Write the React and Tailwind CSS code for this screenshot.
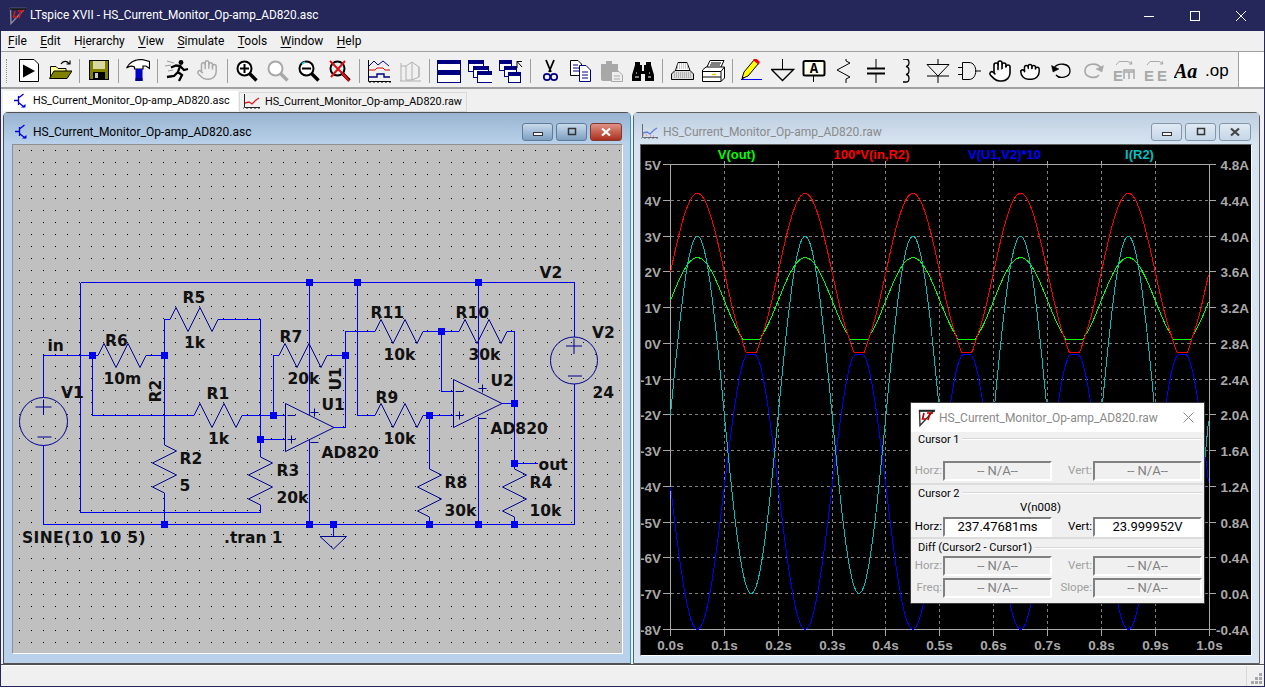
import React from 'react';
import { Hand, Grab } from 'lucide-react';

const UI = { fontFamily: 'Roboto, "Noto Sans", sans-serif' };
const ARIAL = '"Liberation Sans", Arial, sans-serif';
const SCH = '"DejaVu Sans", Verdana, sans-serif';
const TITLE = 'HS_Current_Monitor_Op-amp_AD820';

// ---- small pieces ----

const Logo = ({ dark }) => (
  <svg width="18" height="18" viewBox="0 0 18 18" className="shrink-0">
    <path d="M1.5 1.5H16L2 16.5Z" fill={dark ? 'none' : '#fff'} stroke={dark ? '#8c8c9c' : '#333'} strokeWidth="1.4" />
    <path d="M1 2H17" stroke={dark ? '#111' : '#222'} strokeWidth="1.6" />
    <path d="M6 4L4.5 10H8M9 4H15M12 4L10 11" fill="none" stroke={dark ? '#d01818' : '#c00000'} strokeWidth="1.7" />
  </svg>
);

const Transistor = () => (
  <svg width="14" height="16" viewBox="0 0 14 16" className="shrink-0" stroke="#0000e0" fill="none" strokeWidth="1.3">
    <path d="M5.5 3V12M1 7.5H5.5M5.5 5L10.5 1M5.5 9.5L11 14" />
    <path d="M8 14.5H12.5V11Z" fill="#0000e0" stroke="none" />
  </svg>
);

const MiniPlot = ({ faint }) => (
  <svg width="17" height="16" viewBox="0 0 17 16" className="shrink-0" fill="none" opacity={faint ? 0.6 : 1}>
    <path d="M1.5 0V13.5H17M0 13.5V15M4 13.5V15M8 13.5V15M12 13.5V15M16 13.5V15" stroke="#222" />
    <path d="M2 9L6 8L9 10L13 6L16 4" stroke={faint ? '#2040d0' : '#e02020'} strokeWidth="1.3" />
    {faint && <path d="M2 11L6 11M9 12L14 12" stroke="#e02020" strokeDasharray="1 2" />}
  </svg>
);

const Lens = ({ mark, gray }) => {
  const c = gray ? '#a8a8a8' : '#000';
  return (
    <svg width="24" height="24" viewBox="0 0 24 24" fill="none">
      <path d="M14 14L21.5 21.5" stroke={c} strokeWidth="3.4" />
      <circle cx="9.5" cy="9.5" r="7" fill={mark === 'x' ? '#d8f6f6' : '#fff'} stroke={c} strokeWidth="2" />
      {mark === 'plus' && <path d="M5 9.5H14M9.5 5V14" stroke="#000" strokeWidth="2" />}
      {mark === 'minus' && <path d="M5 9.5H14" stroke="#000" strokeWidth="2" />}
      {mark === 'minus' && <path d="M5 5L8 3" stroke="#30d0e0" strokeWidth="2" />}
      {mark === 'x' && <path d="M2 2L19 19M17 2L3 18M14 14L21 22" stroke="#e01010" strokeWidth="2" />}
    </svg>
  );
};

const Svg = ({ children, ...rest }) => (
  <svg width="24" height="24" viewBox="0 0 24 24" fill="none" {...rest}>{children}</svg>
);

const MiniWin = ({ x, y, w = 15, h = 11 }) => (
  <g>
    <rect x={x + 0.5} y={y + 0.5} width={w} height={h} fill="#fff" stroke="#000080" />
    <rect x={x + 1} y={y + 1} width={w} height={3} fill="#000080" />
  </g>
);

const EGlyph = ({ tail }) => (
  <Svg>
    <path d="M4 6L7 2.5H16L20 5M20 5L17 5M20 5L19 2" stroke="#aaa" />
    <text x="1" y="22" fontFamily={ARIAL} fontWeight="700" fontSize="15" fill="#a8a8a8">E</text>
    {tail}
  </Svg>
);

const TOOLBAR = [
  <Svg>
    <path d="M2.5 .5H17L21.5 5V22.5H2.5Z" fill="#fff" stroke="#000" />
    <path d="M6 5.5V18.5L18 12Z" fill="#000" />
  </Svg>,
  <Svg>
    <path d="M2.5 19V7.5H8L10 9.5H18V12" fill="#ffff90" stroke="#000" />
    <path d="M1.5 19.5L6 12H24L19 19.5Z" fill="#808000" stroke="#000" />
    <path d="M13 5C15 1.500 19 1.500 21 4.500M18.500 5H22V1.500" stroke="#000" strokeWidth="1.2" />
  </Svg>,
  null,
  <Svg>
    <rect x="2.500" y="1.500" width="19" height="19" fill="#808000" stroke="#000" />
    <rect x="6" y="2" width="12" height="8" fill="#d8d8a0" />
    <rect x="6" y="13" width="12" height="7" fill="#000" />
    <rect x="8" y="14" width="3" height="5" fill="#c8c8c8" />
  </Svg>,
  null,
  <Svg>
    <path d="M.5 9C4 2.500 10 .5 16 .5L23.500 2.500V9.500L20 7H17V10H8.500V8C6 6.500 3 7 .5 9Z" fill="#fff" stroke="#000" strokeWidth="1.2" />
    <rect x="9.500" y="10" width="7" height="12" fill="#0000c8" />
    <rect x="9.500" y="19" width="7" height="3" fill="#000080" />
  </Svg>,
  null,
  <Svg>
    <circle cx="16" cy="3.500" r="2.400" fill="#000" />
    <path d="M6 8.500L11 6.500L15 7L13 13L17 16L14 22M13 13L9 17L2 18M15 7L19 11L23 10" stroke="#000" strokeWidth="2.300" />
    <path d="M2 2L9 4M0 7L6 6M3 12L8 11" stroke="#999" strokeWidth="1" />
  </Svg>,
  <Hand size={22} strokeWidth={1.6} color="#a8a8a8" />,
  null,
  <Lens mark="plus" />,
  <Lens gray />,
  <Lens mark="minus" />,
  <Lens mark="x" />,
  null,
  <Svg>
    <path d="M1.500 1V22.500H24" stroke="#000" />
    <path d="M2 7L7 2L11 6L16 2L22 7" stroke="#0000c0" />
    <path d="M2 11H8L10 9H16L18 11H23" stroke="#e00000" />
    <path d="M2 18H10V15H17V18H23" stroke="#000080" strokeWidth="1.4" />
    <path d="M3 22V24M7 22V24M11 22V24M15 22V24M19 22V24M23 22V24" stroke="#000" />
  </Svg>,
  <Svg stroke="#b0b0b0">
    <path d="M2 22H23M3 4V22M3 7H8L14 3L21 8V18L14 21H8V7" />
    <path d="M14 3V21M21 8V18" />
  </Svg>,
  null,
  <Svg>
    <MiniWin x={0} y={1} w={23} h={10} />
    <MiniWin x={0} y={12} w={23} h={11} />
  </Svg>,
  <Svg>
    <MiniWin x={0} y={1} />
    <MiniWin x={5} y={7} />
    <MiniWin x={9} y={12} />
  </Svg>,
  <Svg>
    <MiniWin x={0} y={1} w={12} h={10} />
    <MiniWin x={5} y={7} w={12} h={10} />
    <MiniWin x={9} y={13} w={12} h={10} />
    <path d="M18 9V2.500H23M18 2.500L23 8" stroke="#000" strokeWidth="1" />
  </Svg>,
  null,
  <Svg>
    <path d="M8 1L13 13M16 1L11 13" stroke="#000" strokeWidth="1.800" />
    <circle cx="9" cy="18" r="3.200" stroke="#000080" strokeWidth="1.700" />
    <circle cx="16" cy="18" r="3.200" stroke="#000080" strokeWidth="1.700" />
  </Svg>,
  <Svg>
    <path d="M1.500 1.500H9L12.500 5V16.500H1.500Z" fill="#fff" stroke="#000" />
    <path d="M10.500 6.500H17L21.500 11V22.500H10.500Z" fill="#fff" stroke="#000080" />
    <path d="M4 6H9M4 9H10M4 12H10M13 13H19M13 16H19M13 19H19" stroke="#000080" />
  </Svg>,
  <Svg>
    <path d="M1 5H6V2H12V5H18V13H14V22H3Q1 22 1 20Z" fill="#a8a8a8" />
    <path d="M11.500 12.500H19L22.500 16V22.500H11.500Z" fill="#eee" stroke="#a8a8a8" />
    <path d="M14 17H20M14 20H20" stroke="#a8a8a8" />
  </Svg>,
  <Svg>
    <path d="M4 3H9V6H11V12H13V6H15V3H20V6L23 16V22H14V15H10V22H1V16L4 6Z" fill="#000" />
    <path d="M5 14H6M18 14H19M4 18H8M17 18H20" stroke="#fff" />
  </Svg>,
  null,
  <Svg>
    <path d="M5.500 11.500L8 3.500H17L20 11.500" fill="#fff" stroke="#000" />
    <path d="M7 5H18M7 7H18M7 9H19" stroke="#999" strokeDasharray="1 1" />
    <path d="M1.500 20.500V15L5 11.500H20L23.500 15V20.500Z" fill="#ddd" stroke="#000" />
    <path d="M4 14H21M4 16H21M4 18H21" stroke="#888" strokeDasharray="1 1" />
  </Svg>,
  <Svg>
    <path d="M6 8L9 1.500H23L20 8" fill="#fff" stroke="#000" />
    <path d="M10 4H20M9 6H19" stroke="#000" />
    <path d="M1.500 22.500V11L5 8H23.500V19L20 22.500Z" fill="#fff" stroke="#000" />
    <path d="M1.500 12.500H20V22.500M20 12.500L23.500 8M2 18H20" stroke="#000" />
    <path d="M11 15.500H15" stroke="#e8c800" strokeWidth="1.500" />
  </Svg>,
  null,
  <Svg>
    <path d="M2 19.500L4 13L14 1L18.500 4.500L8 17Z" fill="#ffff00" stroke="#000" />
    <path d="M14 1L15.500 0L19 3L18.500 4.500Z" fill="#f00000" stroke="#f00000" strokeWidth="1.500" />
    <path d="M2 17.500V20L4.500 19Z" fill="#000" />
    <path d="M1 20.500H22" stroke="#0000ff" />
  </Svg>,
  <Svg stroke="#000">
    <path d="M11.500 0V10.500" />
    <path d="M.5 10.500H22.500L11.500 21.500Z" strokeWidth="1.300" />
  </Svg>,
  <Svg>
    <rect x="1.500" y="2" width="21" height="14.500" rx="1.500" fill="#fffff0" stroke="#000" strokeWidth="2" />
    <path d="M11.500 16.500V23" stroke="#000" />
    <text x="12" y="14" textAnchor="middle" fontFamily='"Liberation Mono", monospace' fontWeight="700" fontSize="14" fill="#000">A</text>
  </Svg>,
  <Svg stroke="#000">
    <path d="M13 0V2L17 4L4 11L17 18L13 20V24" />
  </Svg>,
  <Svg stroke="#000">
    <path d="M12 0V9M12 15V24" />
    <path d="M3 9.500H21M3 14.500H21" strokeWidth="1.800" />
  </Svg>,
  <Svg stroke="#000" strokeWidth="1.300">
    <path d="M8 0H11C15 0 15 7 11 7.500C15 8 15 15 11 15.500C15 16 15 23 11 23H8" />
  </Svg>,
  <Svg stroke="#000">
    <path d="M12 0V5M12 17V24M1 5.500H23L12 17ZM1 17H23" />
  </Svg>,
  <Svg stroke="#000">
    <path d="M5.500 3.500H12C21 3.500 21 20.500 12 20.500H5.500ZM1 8.500H5.500M1 15.500H5.500M18 12H24" />
  </Svg>,
  <Hand size={24} strokeWidth={1.6} color="#000" fill="#fff" />,
  <Grab size={22} strokeWidth={1.6} color="#000" fill="#fff" />,
  <Svg stroke="#000">
    <path d="M4 9C8 3 20 4 20 12C20 19 9 20 6 16" strokeWidth="1.300" />
    <path d="M1.500 6.500L3 13L9 10Z" fill="#000" strokeWidth=".5" />
  </Svg>,
  <Svg stroke="#a8a8a8">
    <path d="M20 9C16 3 4 4 4 12C4 19 15 20 18 16" strokeWidth="1.600" />
    <path d="M22.500 6.500L21 13L15 10Z" fill="#a8a8a8" strokeWidth=".5" />
  </Svg>,
  <EGlyph tail={<path d="M12 11H22V13H12ZM12 13V20M17 13V20M22 13V20" stroke="#a8a8a8" strokeWidth="1.500" />} />,
  <EGlyph tail={<text x="14" y="22" fontFamily={ARIAL} fontWeight="700" fontSize="15" fill="#a8a8a8">E</text>} />,
  <Svg>
    <text x="0" y="19" fontFamily='"Liberation Serif", serif' fontWeight="700" fontStyle="italic" fontSize="20" fill="#000">Aa</text>
  </Svg>,
  <Svg>
    <text x="0" y="17" fontFamily={ARIAL} fontSize="17" fill="#000">.op</text>
  </Svg>,
];

const CapButton = ({ kind, active }) => {
  const bg = kind === 'close' && active
    ? 'bg-gradient-to-b from-[#dc9386] via-[#c8604e] to-[#a83020] border-[#7d3a30]'
    : active
      ? 'bg-gradient-to-b from-[#c9d9ea] via-[#a3bdd8] to-[#7f9fc0] border-[#5d7c9c]'
      : 'bg-gradient-to-b from-[#e0eaf4] to-[#c5d6e7] border-[#8397ab]';
  const ink = kind === 'close' ? (active ? '#fff' : '#444') : '#333';
  return (
    <div className={`h-[18px] rounded-[3px] border flex items-center justify-center ${kind === 'close' ? 'w-[32px]' : 'w-[31px]'} ${bg}`}>
      <svg width="14" height="10" viewBox="0 0 14 10" fill="none">
        {kind === 'min' && <rect x="2.500" y="5.500" width="9" height="3" fill="#f4f4f4" stroke={ink} />}
        {kind === 'max' && <rect x="3.500" y="1.500" width="7" height="6" stroke={ink} strokeWidth="1.500" />}
        {kind === 'close' && <path d="M3 1.500L11 8.500M11 1.500L3 8.500" stroke={ink} strokeWidth="2.200" />}
      </svg>
    </div>
  );
};

const ChildTitle = ({ active, icon, children }) => (
  <div className={`h-[31px] pt-[7px] flex items-center bg-gradient-to-b ${active ? 'from-[#99b4d1] to-[#b9d1ea]' : 'from-[#bfcfe0] to-[#d7e4f2]'}`}>
    <div className="w-[29px] flex justify-end pr-[5px]">{icon}</div>
    <div className={`flex-1 text-[12px] leading-none ${active ? 'text-[#000]' : 'text-[#8a8a8a]'}`} style={UI}>{children}</div>
    <div className="flex gap-[3px] pr-[8px]">
      <CapButton kind="min" active={active} />
      <CapButton kind="max" active={active} />
      <CapButton kind="close" active={active} />
    </div>
  </div>
);

// ---- schematic ----

const wires = [
  'M80.5 282.5H574.5V337M574.5 384V524.5H43.5V445M43.5 397V355.5H98',
  'M80.5 282.5V512.5H260.500V505',
  'M146 355.5H164.500M164.500 445V319.500H170M218 319.500H260.500V457',
  'M92.500 355.500V415.500H194M242 415.500H285M260.500 439.500H285',
  'M273.500 415.500V355.500H279M327 355.500H345.500M333.500 427.500H345.500V331.500H375M423 331.500H459M507 331.500H514.500V469',
  'M309.500 282.500V415M309.500 439V524.500M478.500 282.500V383M478.500 417V524.500',
  'M357.500 282.500V415.500H375M423 415.500H453M441.500 331.500V391.500H453M429.500 415.500V469M429.500 517V524.500',
  'M502 403.500H514.500M514.500 517V524.500M514.500 463.500H538M164.500 493V524.500M333.500 524.500V536',
];

const zigH = (x, y) => `M${x} ${y}l6 -12l12 24l12 -24l12 24l6 -12`;
const zigV = (x, y) => `M${x} ${y}l12 6l-24 12l24 12l-24 12l12 6`;

const resistors = [
  zigH(98, 355.5), zigH(170, 319.5), zigH(194, 415.5), zigH(279, 355.5),
  zigH(375, 331.5), zigH(459, 331.5), zigH(375, 415.5),
  zigV(164.5, 445), zigV(260.5, 457), zigV(429.5, 469), zigV(514.5, 469),
];

const junctions = [
  [309, 282], [357, 282], [478, 282], [92, 355], [164, 355], [273, 415], [260, 439],
  [164, 524], [309, 524], [333, 524], [429, 524], [478, 524], [514, 524], [345, 355],
  [441, 331], [429, 415], [514, 403], [514, 463],
];

const labels = [
  ['in', 47.5, 351], ['V1', 61, 398], ['R6', 105, 346], ['10m', 103.5, 384], ['R5', 182.5, 302.5],
  ['1k', 184, 347.5], ['R1', 206.5, 398.5], ['1k', 208, 444], ['R7', 279.5, 342], ['20k', 287.5, 384],
  ['R2', 179.5, 464], ['5', 179.5, 490.5], ['R3', 276.5, 476], ['20k', 276.5, 502.5],
  ['SINE(10 10 5)', 22, 542.5, 0.35], ['.tran 1', 224, 542.5], ['V2', 539.5, 277.5], ['R11', 370.5, 318],
  ['10k', 383.5, 360], ['R10', 455.5, 318], ['30k', 468.5, 360], ['U1', 321.5, 409.5], ['AD820', 321.5, 458],
  ['R9', 375.5, 402.5], ['10k', 383.5, 444], ['U2', 490.5, 385.5], ['AD820', 490.5, 434], ['out', 538.5, 469.5],
  ['R8', 444.5, 488], ['30k', 444.5, 516], ['R4', 529.5, 488], ['10k', 529.5, 516], ['V2', 592, 337.5], ['24', 592.5, 398],
];

const dots = [];
for (let x = 19; x < 622; x += 12) for (let y = 150; y < 653; y += 12) dots.push(`M${x} ${y}h1v1h-1z`);

const Source = ({ cx, cy, r }) => (
  <g fill="none" stroke="#000090">
    <circle cx={cx} cy={cy} r={r} />
    <path d={`M${cx - 8} ${cy - 14.5}H${cx + 8}M${cx} ${cy - 22}V${cy - 6.5}M${cx - 6} ${cy + 15.5}H${cx + 8}`} />
  </g>
);

const OpAmp = ({ x, y }) => (
  <g fill="none" stroke="#000090">
    <path d={`M${x} ${y}V${y + 48}L${x + 48.5} ${y + 24}Z`} />
    <path d={`M${x + 2} ${y + 12}h8M${x + 2} ${y + 36}h8M${x + 6} ${y + 32}v8`} />
    <path d={`M${x + 25} ${y + 9}h8M${x + 29} ${y + 5}v8M${x + 25} ${y + 39}h8`} />
  </g>
);

const Schematic = () => (
  <svg width="609" height="508" viewBox="13 145 609 508" className="block bg-[#c0c0c0]">
    <path d={dots.join('')} fill="#000" />
    <Source cx={43.5} cy={421.5} r={24} />
    <Source cx={574} cy={360.5} r={23.5} />
    <OpAmp x={285.5} y={403.5} />
    <OpAmp x={453.5} y={379.5} />
    <g fill="none" stroke="#0000f0" shapeRendering="crispEdges">
      {wires.map((d, i) => <path key={i} d={d} />)}
    </g>
    <g fill="none" stroke="#000090">
      {resistors.map((d, i) => <path key={i} d={d} />)}
      <path d="M320 536.500H346.500L333.500 549Z" />
    </g>
    <g fill="#0000f0">
      {junctions.map(([x, y], i) => <rect key={i} x={x - 3} y={y - 3} width="7" height="7" />)}
    </g>
    <g fontFamily={SCH} fontWeight="700" fontSize="15.5" fill="#111">
      {labels.map(([t, x, y, sp], i) => <text key={i} x={x} y={y} letterSpacing={sp}>{t}</text>)}
      <text transform="translate(160.500 402.500) rotate(-90)">R2</text>
      <text transform="translate(340.500 390.500) rotate(-90)">U1</text>
    </g>
  </svg>
);

// ---- waveform plot ----

const X0 = 670.5;
const XS = 538.6;
const Y0 = 343.4;
const YS = 35.72;
const sy = (v) => Y0 - v * YS;
const gridY = (v) => Math.floor(sy(v)) + 0.5;
const gridX = (k) => Math.floor(X0 + (k / 10) * XS) + 0.5;
const sinT = (t) => Math.sin(2 * Math.PI * 5 * t);
const dist = (t) => Math.abs(((t % 0.2) + 0.2) % 0.2 - 0.15);

const vRed = (t) => {
  const d = dist(t);
  if (d < 0.01) return -0.25;
  if (d < 0.02) return -0.25 + ((d - 0.01) / 0.01) * 0.47;
  return 2 + 2.2 * sinT(t);
};
const vGreen = (t) => (dist(t) < 0.018 ? 0.1 : 1.2 + 1.2 * sinT(t));
const vBlue = (t) => {
  const u = 4 * (1 + sinT(t));
  return -Math.sqrt(0.09 + u * u);
};
const vTeal = (t) => -2 + 5 * sinT(t);

const trace = (fn) => {
  let d = '';
  for (let x = 0; x <= XS; x += 1) {
    const t = x / XS;
    d += `${x === 0 ? 'M' : 'L'}${(X0 + x).toFixed(1)} ${sy(fn(t)).toFixed(1)}`;
  }
  return d;
};

const VOLTS = [5, 4, 3, 2, 1, 0, -1, -2, -3, -4, -5, -6, -7, -8];
const AMPS = ['4.8A', '4.4A', '4.0A', '3.6A', '3.2A', '2.8A', '2.4A', '2.0A', '1.6A', '1.2A', '0.8A', '0.4A', '0.0A', '-0.4A'];

const Plot = () => (
  <svg width="610" height="510" viewBox="641 145 610 510" className="block bg-black">
    <g fontFamily={ARIAL} fontWeight="700" fontSize="13">
      <text x="736.5" y="159" textAnchor="middle" fill="#00ff00">V(out)</text>
      <text x="871.5" y="159" textAnchor="middle" fill="#ff0000">100*V(in,R2)</text>
      <text x="1004.5" y="159" textAnchor="middle" fill="#0000ff">V(U1,V2)*10</text>
      <text x="1139.5" y="159" textAnchor="middle" fill="#00bfbf">I(R2)</text>
    </g>
    <g stroke="#808080" strokeDasharray="3 3" shapeRendering="crispEdges">
      {VOLTS.slice(1, -1).map((v) => <path key={v} d={`M671 ${gridY(v)}H1209`} />)}
      {[1, 2, 3, 4, 5, 6, 7, 8, 9].map((k) => <path key={k} d={`M${gridX(k)} 165V629`} />)}
    </g>
    <g stroke="#a8a8a8" fill="none" shapeRendering="crispEdges">
      <path d={`M663 ${gridY(5)}H1216M663 ${gridY(-8)}H1216M670.500 164V636M1209.500 164V636`} />
      {VOLTS.slice(1, -1).map((v) => <path key={v} d={`M663 ${gridY(v)}H671M1209 ${gridY(v)}H1216`} />)}
      {[1, 2, 3, 4, 5, 6, 7, 8, 9].map((k) => <path key={k} d={`M${gridX(k)} 161V165M${gridX(k)} 629V636`} />)}
    </g>
    <g fill="none" shapeRendering="crispEdges">
      <path d={trace(vGreen)} stroke="#00ff00" />
      <path d={trace(vRed)} stroke="#ff0000" />
      <path d={trace(vBlue)} stroke="#0000ff" />
      <path d={trace(vTeal)} stroke="#00bfbf" />
    </g>
    <g fontFamily={ARIAL} fontWeight="700" fontSize="13.500" fill="#a9a9a9">
      {VOLTS.map((v) => <text key={v} x="661" y={gridY(v) + 5} textAnchor="end">{v}V</text>)}
      {AMPS.map((a, i) => <text key={a} x="1249" y={gridY(VOLTS[i]) + 5} textAnchor="end">{a}</text>)}
      {[0, 1, 2, 3, 4, 5, 6, 7, 8, 9, 10].map((k) => (
        <text key={k} x={gridX(k)} y="650" textAnchor="middle">{(k / 10).toFixed(1)}s</text>
      ))}
    </g>
  </svg>
);

// ---- cursor dialog ----

const Field = ({ value, on }) => (
  <div className={`w-[109px] h-[20px] border-2 border-t-[#808080] border-l-[#808080] border-b-white border-r-white flex items-center justify-center text-[13px] ${on ? 'bg-white text-black' : 'bg-[#f0f0f0] text-[#808080]'}`}>
    {value}
  </div>
);

const ReadRow = ({ left, right, values, on }) => (
  <div className={`flex items-center h-[20px] text-[11.5px] ${on ? 'text-black' : 'text-[#a0a0a0]'}`}>
    <span className="w-[31px] text-right mr-[1px]">{left}</span>
    <Field value={values[0]} on={on} />
    <span className="w-[40px] text-right mr-[1px]">{right}</span>
    <Field value={values[1]} on={on} />
  </div>
);

const GroupHead = ({ h, children }) => (
  <div className={`flex items-center pl-[7px] ${h}`}>
    <span className="text-[11px] leading-none text-black pr-[2px]">{children}</span>
    <div className="flex-1 h-[2px] mr-[2px] border-t border-[#d8d8d8] bg-white"></div>
  </div>
);

const NA = ['-- N/A--', '-- N/A--'];

const CursorDialog = () => (
  <div className="absolute left-[909px] top-[290px] w-[295px] h-[202px] border border-[#3a3a3a] bg-[#f0f0f0] shadow-[0_0_6px_rgba(0,0,0,0.25)]" style={UI}>
    <div className="h-[29px] bg-white flex items-center pl-[7px] pr-[10px] text-[12px] text-[#8a8a8a]">
      <Logo />
      <span className="ml-[3px] flex-1 whitespace-nowrap">{TITLE}.raw</span>
      <svg width="11" height="11" viewBox="0 0 11 11" stroke="#8a8a8a"><path d="M.5 .5L10.500 10.500M10.500 .5L.5 10.500" /></svg>
    </div>
    <div className="h-[53px] border-b-2 border-b-[#dcdcdc]">
      <GroupHead h="h-[14px]">Cursor 1</GroupHead>
      <div className="mt-[15px]"><ReadRow left="Horz:" right="Vert:" values={NA} /></div>
    </div>
    <div className="h-[54px] border-b-2 border-b-[#dcdcdc]">
      <GroupHead h="h-[16px]">Cursor 2</GroupHead>
      <div className="h-[16px] text-center text-[11.5px] leading-[12px] pr-[34px]">V(n008)</div>
      <ReadRow on left="Horz:" right="Vert:" values={['237.47681ms', '23.999952V']} />
    </div>
    <div>
      <GroupHead h="h-[17px]">Diff (Cursor2 - Cursor1)</GroupHead>
      <div className="flex flex-col gap-[2px]">
        <ReadRow left="Horz:" right="Vert:" values={NA} />
        <ReadRow left="Freq:" right="Slope:" values={NA} />
      </div>
    </div>
  </div>
);

// ---- frame ----

const MENUS = [['', 'F', 'ile'], ['', 'E', 'dit'], ['H', 'i', 'erarchy'], ['', 'V', 'iew'], ['', 'S', 'imulate'], ['', 'T', 'ools'], ['', 'W', 'indow'], ['', 'H', 'elp']];

export default function App() {
  return (
    <div className="w-[1265px] h-[694px] bg-white overflow-hidden">
      <div className="h-[687px] flex flex-col border-x border-b border-[#25275a] bg-[#f0f0f0]" style={UI}>
        {/* main title bar */}
        <div className="h-[31px] bg-[#25275a] flex items-center text-white">
          <div className="pl-[8px] pr-[3px]"><Logo dark /></div>
          <span className="flex-1 text-[11.85px]">LTspice XVII - {TITLE}.asc</span>
          <div className="flex items-center">
            <svg width="46" height="12" viewBox="0 0 46 12" stroke="#fff"><path d="M18 6.500H28" /></svg>
            <svg width="46" height="12" viewBox="0 0 46 12" fill="none" stroke="#fff"><rect x="18.500" y="1.500" width="9" height="9" /></svg>
            <svg width="46" height="12" viewBox="0 0 46 12" stroke="#fff"><path d="M18 1L28 11M28 1L18 11" /></svg>
          </div>
        </div>

        {/* menu */}
        <div className="h-[20px] pl-[1px] flex items-center text-[12px] text-black">
          {MENUS.map(([pre, key, rest]) => (
            <span key={pre + key + rest} className="px-[6px] mr-[1.4px]">{pre}<span className="underline underline-offset-2">{key}</span>{rest}</span>
          ))}
        </div>

        {/* toolbar */}
        <div className="h-[38px] border-t border-b-2 border-[#a0a0a0] flex">
          <div className="w-[1238px] border-r border-[#a0a0a0] flex items-start pt-[7px]">
            <div className="w-[3px] h-[24px] ml-[5px] mr-[5px] border-l border-dotted border-[#909090]"></div>
            {TOOLBAR.map((icon, i) => (
              icon === null
                ? <div key={i} className="w-[8px] h-[24px] pl-[3px]"><div className="w-[1px] h-full bg-[#a0a0a0]"></div></div>
                : <div key={i} className="w-[31px] h-[24px] pl-[3px]">{icon}</div>
            ))}
          </div>
          <div className="flex-1 bg-white"></div>
        </div>

        {/* tabs */}
        <div className="h-[23px] pl-[2px] flex items-start text-[10.8px] text-black whitespace-nowrap">
          <div className="mt-[2px] w-[235px] h-[20px] bg-white flex items-center pl-[10px] gap-[6px]">
            <Transistor />
            <span>{TITLE}.asc</span>
          </div>
          <div className="mt-[3px] ml-[1px] w-[228px] h-[20px] border border-[#d9d9d9] flex items-center pl-[3px] gap-[5px]">
            <MiniPlot />
            <span>{TITLE}.raw</span>
          </div>
        </div>

        {/* MDI area */}
        <div className="relative h-[553px] pl-[2px] flex items-start gap-[2px] border-b border-[#505050]">
          <div className="w-[628px] h-[552px] rounded-t-[5px] border border-[#505050] border-r-[#1b9ed4] bg-[#b9d1ea]">
            <ChildTitle active icon={<Transistor />}>{TITLE}.asc</ChildTitle>
            <div className="ml-[8px] w-[611px] border border-[#909090] border-r-white border-b-white">
              <Schematic />
            </div>
          </div>
          <div className="w-[627px] h-[552px] rounded-t-[5px] border border-[#606060] bg-[#d7e4f2]">
            <ChildTitle icon={<MiniPlot faint />}>{TITLE}.raw</ChildTitle>
            <div className="ml-[6px] w-[612px] border border-[#606060] border-r-white border-b-white">
              <Plot />
            </div>
          </div>
          <CursorDialog />
        </div>

        {/* status bar */}
        <div className="flex-1 border-t border-white flex justify-end items-stretch">
          <div className="w-[18px] border-l border-[#d8d8d8] flex items-end justify-end pr-[1px] pb-[1px]">
            <svg width="12" height="12" viewBox="0 0 12 12" fill="#a8a8a8"><path d="M8 0h3v3h-3zM4 4h3v3h-3zM8 4h3v3h-3zM0 8h3v3h-3zM4 8h3v3h-3zM8 8h3v3h-3z" /></svg>
          </div>
        </div>
      </div>
    </div>
  );
}
